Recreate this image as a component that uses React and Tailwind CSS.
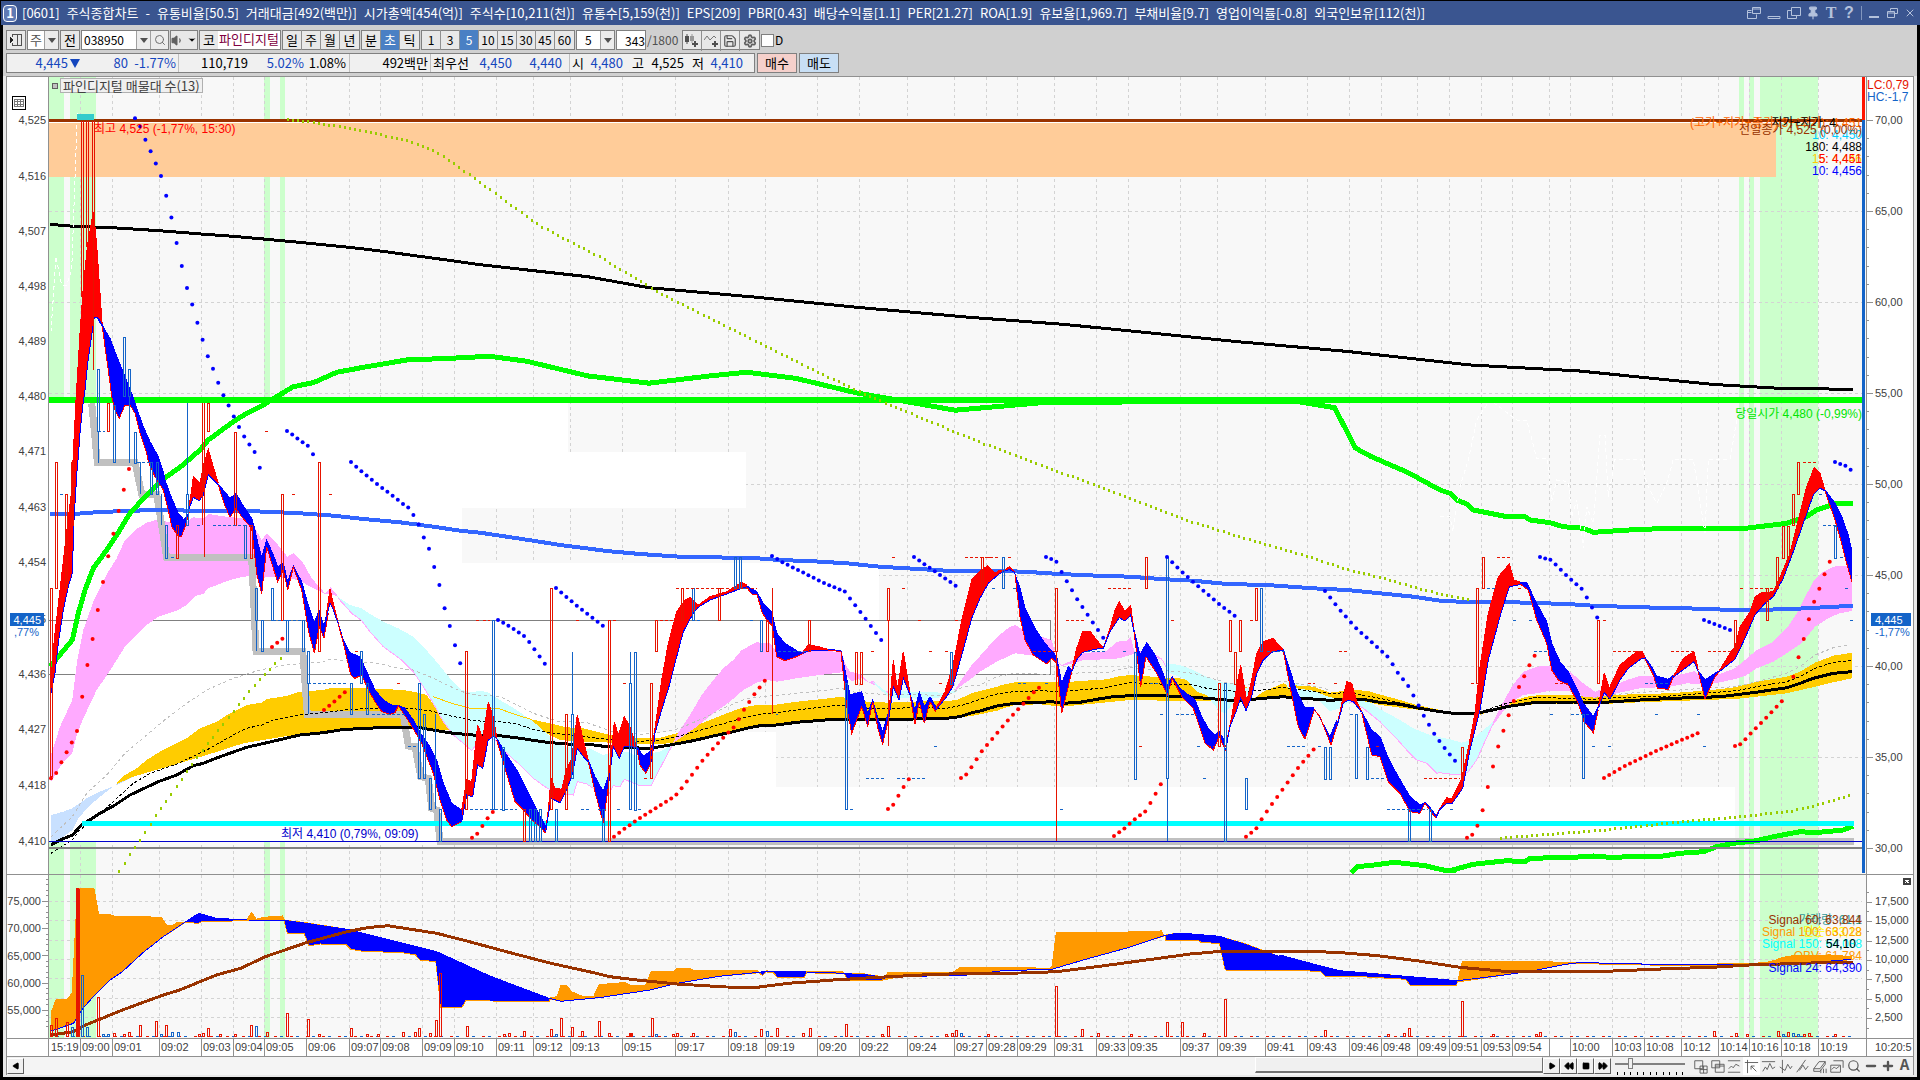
import { ChevronDown, Search, Volume1, Save, Settings, Play, Rewind, Square, FastForward, Minus, Plus, Pin, X } from 'lucide-react';

// Each tile turns a compact "x,y x,y" string into plot points.
const tile = (ox, oy, kx = 3, ky = 3) => (s) =>
  s.trim().split(/\s+/).map((p) => {
    const [a, b] = p.split(',').map(Number);
    return [ox + a / kx, oy + b / ky];
  });

const O = tile(0, 0, 0.8167, 0.8167);
const A = tile(0, 80);
const B = tile(0, 460);
const C = tile(480, 520);
const D = tile(980, 520);
const E = tile(1440, 420);
const F = tile(0, 860, 2.45);
const G = tile(610, 900, 2.24);
const H = tile(1280, 860, 2.45);

const str = (pts) => pts.map(([x, y]) => `${x.toFixed(1)},${y.toFixed(1)}`).join(' ');

// sample a polyline every `step` pixels along x
const sample = (pts, step = 5.2) => {
  const out = [];
  let i = 0;
  for (let x = pts[0][0]; x <= pts[pts.length - 1][0] + 0.5; x += step) {
    while (i < pts.length - 2 && x > pts[i + 1][0]) i++;
    const [x1, y1] = pts[i];
    const [x2, y2] = pts[i + 1];
    out.push([x, y1 + ((x - x1) / (x2 - x1 || 1)) * (y2 - y1)]);
  }
  return out;
};

const RED = '#e61400';
const BLUE = '#1464c8';

const gridX = [80, 112, 159, 201, 233, 264, 306, 349, 380, 422, 454, 496, 533, 570, 622, 675, 728, 765, 817, 859, 907, 954, 986, 1017, 1054, 1096, 1128, 1180, 1217, 1265, 1307, 1349, 1381, 1417, 1449, 1481, 1512, 1549, 1570, 1612, 1644, 1681, 1718, 1749, 1781, 1818];
const times = ['09:00', '09:01', '09:02', '09:03', '09:04', '09:05', '09:06', '09:07', '09:08', '09:09', '09:10', '09:11', '09:12', '09:13', '09:15', '09:17', '09:18', '09:19', '09:20', '09:22', '09:24', '09:27', '09:28', '09:29', '09:31', '09:33', '09:35', '09:37', '09:39', '09:41', '09:43', '09:46', '09:48', '09:49', '09:51', '09:53', '09:54', '', '10:00', '10:03', '10:08', '10:12', '10:14', '10:16', '10:18', '10:19'];
const gridY = [211, 302, 393, 484, 575, 666, 757];
const subY = [901, 920, 940, 959, 978, 998, 1017];
const sessions = [[49, 15], [70, 26], [264, 6], [280, 5], [1739, 5], [1749, 5], [1760, 58]];

// volume profile rows: y, height, right edge
const profile = [[403, 49, 568], [452, 56, 746], [508, 55, 462], [563, 57, 879], [620, 54, 1050], [674, 58, 633], [732, 55, 776], [787, 55, 1735]];

// filled bands: colour, upper edge, lower edge
const bands = [
  ['#c8e0ff', B('153,1065 190,1055 217,1045 260,1015 300,995 350,975 400,950'), B('153,1150 190,1130 217,1110 232,1080 260,1045 300,1010 350,972 400,950')],
  ['#ffaaff', B('153,885 180,800 217,720 232,600 250,510 280,425 325,335 350,295 375,240 405,210 440,188 475,178 500,185 560,185 580,172 610,176 625,162 665,168 690,172 755,175 765,205 785,240 800,220 830,250 862,290 880,280 910,310 935,355 975,400 992,382 1015,410'), B('153,965 190,905 217,880 232,820 250,775 290,690 325,640 375,560 440,495 475,470 530,452 560,435 585,408 610,402 625,385 690,360 730,350 755,348 785,358 800,350 840,352 880,357 905,365 930,380 975,402 1000,405')],
  ['#ffcc00', B('350,970 375,945 410,925 440,900 480,875 530,850 560,835 600,805 650,785 690,760 740,735 785,728 800,717 860,708 900,695 970,690 990,685 1085,685 1150,687 1210,690 1250,697 1280,705 1355,810'), B('350,972 400,950 440,938 530,912 620,885 730,850 800,838 900,822 1050,808 1240,805 1355,812')],
  ['#ffcc00', C('150,597 200,608 260,622 310,625 370,640 420,650 500,655 540,653 590,640 640,620 690,600 740,580 790,562 830,555 880,555 950,545 1020,538 1085,530 1110,540 1165,545 1225,548 1300,545 1400,543 1430,540 1480,518 1520,508 1560,498'), C('150,600 200,640 240,660 300,665 400,668 500,672 580,670 640,662 740,640 830,620 900,615 1000,605 1085,600 1225,600 1400,598 1480,587 1560,570')],
  ['#ffcc00', D('60,496 105,487 180,485 250,487 300,483 380,478 410,470 450,465 540,472 640,478 680,490 740,497 800,500'), D('60,568 105,555 180,553 245,560 350,550 450,540 560,542 640,542 740,545 800,545')],
  ['#ccffff', [...B('1000,395 1015,412 1050,435 1085,445 1110,462 1150,485 1195,505 1240,530 1270,560 1305,600 1350,655 1385,690 1415,697 1435,693'), ...C('20,515 60,540 110,570 160,605 200,640 240,675 300,690 330,685 370,705 400,695 440,695 480,712 510,700 540,695 575,675')], [...B('1000,395 1055,460 1085,482 1110,515 1150,560 1205,600 1240,635 1270,680 1300,730 1330,785 1360,825 1390,850 1415,872 1432,850'), ...C('5,675 25,650 45,660 80,700 120,735 160,775 195,800 230,820 280,825 292,785 320,792 370,825 385,825 400,797 420,800 433,778 480,797 515,795 540,745 575,677')]],
  ['#ffaaff', C('585,655 600,630 630,585 665,525 700,480 730,445 760,420 785,390 830,367 870,370 890,395 950,395 985,393 1085,395 1095,430 1110,455 1140,462 1165,487 1180,482 1200,505 1225,515'), C('585,665 600,655 650,620 700,580 750,545 790,510 830,488 860,480 890,485 950,475 1020,465 1085,457 1115,483 1145,475 1170,490 1190,497 1225,520')],
  ['#ccffff', C('1180,485 1225,520 1250,510 1300,515 1390,518 1430,510'), C('1180,490 1225,530 1250,535 1300,535 1335,540 1390,530 1430,515')],
  ['#ffaaff', [...C('1425,510 1440,485 1475,435 1500,408'), ...D('50,352 90,320 105,315 140,335 185,350 215,360 230,420 245,437')], [...C('1425,515 1440,500 1475,475 1500,455'), ...D('50,425 105,400 160,407 200,410 230,425 245,440')]],
  ['#ffaaff', D('245,435 280,420 310,400 380,393 410,365 440,362 452,352 465,400 500,385 520,400 545,415 560,440'), D('245,438 280,430 310,420 380,418 420,415 450,405 475,400 500,400 545,420 560,445')],
  ['#ccffff', D('560,430 600,435 640,450 680,470 715,485 740,490 770,490 800,505 815,500'), D('560,455 620,480 650,515 680,525 715,570 735,580 760,550 790,540 815,530')],
  ['#ffcc00', D('815,540 850,515 910,490 935,500'), D('815,542 850,537 910,533 935,537')],
  ['#ccffff', [...D('920,485 1000,505 1050,530 1100,520 1140,535 1160,540 1205,570 1260,600 1300,625 1350,645'), ...E('0,952 30,958 65,968 95,960 130,930 160,905')], [...D('920,500 950,530 975,540 1010,535 1050,573 1080,565 1110,545 1150,565 1200,605 1240,645 1280,690 1310,720 1340,730 1370,760'), ...E('0,1058 30,1062 65,1065 85,1055 110,1020 130,975 160,910')]],
  ['#ffcc00', D('930,495 1000,500 1050,518 1110,510 1160,512 1205,525 1260,540 1310,555 1380,570'), D('930,502 1000,512 1050,532 1110,538 1150,543 1200,555 1300,568 1380,575')],
  ['#ffcc00', E('120,880 160,870 200,848 260,830 300,825 380,825 465,830 520,825 600,822 690,820 790,812 835,808 885,802 950,785 1040,770 1080,755 1125,728 1180,707 1236,698'), E('120,884 200,862 290,852 380,852 465,853 600,847 790,840 885,837 950,830 1040,820 1125,800 1180,787 1236,775')],
  ['#ffaaff', E('160,905 185,855 215,800 250,755 290,740 325,737 355,748 390,755 430,790 465,815 495,805 515,800 560,780 600,768 640,768 660,778 690,778 715,765 765,753 790,780 800,787 830,765 885,745 915,720 950,690 1000,665 1040,625 1070,580 1085,550 1120,485 1150,455 1180,440 1215,437 1236,445'), E('160,915 185,880 215,845 250,825 290,820 330,812 390,812 430,830 465,833 520,822 600,805 690,800 740,790 790,793 835,788 885,777 915,768 950,745 1000,725 1040,700 1085,670 1125,620 1170,592 1200,580 1236,573')],
];

// moving average ribbon: up flag, upper edge, lower edge
const ribbon = [
  [1, [...B('153,695 157,600 165,520 185,345 200,215 215,90'), ...A('220,1120 228,960 240,760 250,620 262,500 272,440 280,395 285,440 292,520 300,640 307,738')], [...B('153,700 165,640 175,550 190,450 205,380 217,340 222,180 232,20'), ...A('235,1130 240,1060 248,980 255,930 262,860 270,800 283,712 292,712 307,740')]],
  [0, [...A('292,712 300,722 312,745 330,775 345,815 365,865 395,940 410,985 430,1040 450,1085 475,1130 490,1175'), ...B('495,60 515,115 535,160 552,180 568,155')], [...A('307,740 315,800 325,870 335,950 345,990 358,1015 375,975 390,975 405,1000 420,1060 440,1120'), ...B('445,5 465,50 490,90 505,150 515,200 535,228 545,228 555,200 568,157')]],
  [1, B('565,150 575,90 580,50 600,70 612,10 625,-32 640,20 655,70'), B('565,152 580,112 598,122 610,105 625,45 655,75')],
  [0, B('655,72 690,115 708,100 725,130 755,175 765,210 775,255 785,292 800,240 820,285 833,320 850,310 863,365 880,318 905,365 920,420 943,490 957,450 972,500 985,440'), B('655,75 672,130 690,172 708,145 725,170 755,205 770,340 785,402 800,260 820,325 833,365 850,330 863,390 880,322 905,390 925,510 943,580 958,500 972,535 985,460')],
  [1, B('978,470 990,387 1000,430 1015,490'), B('978,480 990,428 1000,450 1015,492')],
  [0, B('1015,490 1030,540 1050,578 1080,590 1100,635 1125,690 1150,720 1180,738 1195,735 1215,745 1240,780 1265,825 1290,860 1310,900 1330,970 1355,1030 1385,1050'), B('1015,492 1035,570 1052,645 1065,655 1085,645 1105,690 1125,725 1145,755 1170,763 1185,758 1195,737 1230,790 1265,850 1300,940 1320,1020 1340,1080 1355,1100 1385,1085')],
  [1, [...B('1385,1050 1400,960 1415,965 1433,795 1448,835'), ...C('25,545 40,590 50,650')], [...B('1385,1085 1400,1005 1418,1010 1433,915 1448,925 1465,840'), ...C('40,650 50,655')]],
  [0, C('50,655 80,705 110,750 140,810 170,870 197,918'), C('50,660 75,745 105,845 130,870 155,900 180,920 197,940')],
  [1, C('197,930 205,870 213,775 225,805 245,808 260,745 275,715 292,585 305,640 325,720'), C('197,935 213,835 240,848 260,810 278,760 292,685 310,710 325,725')],
  [0, C('325,720 345,770 370,815 385,770'), C('325,725 345,815 370,910 385,800')],
  [1, C('385,785 403,605 415,645 433,590 450,620 470,680'), C('385,800 400,680 418,715 433,680 450,678 470,685')],
  [0, C('470,680 490,708 510,695 520,665'), C('470,685 480,735 497,760 510,735 520,690')],
  [1, C('515,690 530,590 545,480 565,370 590,275 615,240 630,233 655,255 690,230 740,215 785,187 800,195'), C('515,725 525,640 545,570 570,490 590,410 610,335 640,280 655,262 690,240 740,222 785,205 800,200')],
  [0, C('800,198 830,215 850,250 875,275 890,340 915,370 955,395 970,397'), C('800,202 815,222 832,225 845,275 860,300 877,318 890,410 915,422 945,412 970,400')],
  [1, C('970,395 985,373 1015,380 1045,388'), C('970,400 985,392 1015,392 1045,390')],
  [0, C('1045,388 1083,392 1095,450 1110,525 1145,515 1163,580 1178,540 1195,600 1208,635 1225,580'), C('1045,390 1083,395 1100,560 1115,640 1130,600 1145,560 1163,620 1178,545 1195,630 1208,672 1225,600')],
  [1, C('1225,600 1240,420 1252,510 1270,395 1290,520'), C('1225,605 1240,500 1257,540 1270,475 1290,525')],
  [0, C('1290,520 1305,570 1318,515 1333,560 1350,530 1368,562'), C('1290,525 1305,612 1318,545 1333,610 1350,545 1368,577')],
  [1, C('1368,565 1395,515 1418,440 1430,380 1445,300 1475,180 1505,150 1522,138 1545,160 1560,150 1575,150 1588,140 1605,155'), C('1368,570 1400,530 1418,500 1430,460 1455,370 1475,295 1500,235 1525,190 1560,160 1588,148 1605,158')],
  [0, D('103,155 120,205 135,265 165,325 195,370 230,410 245,490 265,440 275,450'), D('105,165 120,290 135,360 160,405 200,432 215,415 230,430 245,580 260,520 275,455')],
  [1, D('275,450 290,385 308,335 330,333 350,360 370,383 390,325 405,270 418,245 435,275 452,258 462,330'), D('275,455 290,420 308,397 345,388 370,385 390,335 418,293 435,303 452,285 462,335')],
  [0, D('462,330 480,405 500,368 525,405 545,450 562,495 577,470 600,505 645,540 665,590 685,625 705,645 718,635 735,665'), D('462,335 470,400 482,500 498,410 530,460 562,525 577,475 605,530 640,565 675,670 700,690 718,650 737,692')],
  [1, D('737,680 755,590 770,500 782,435 800,545 815,480 830,400 850,365 878,355 910,388'), D('737,690 750,620 770,570 782,535 798,572 815,530 830,460 850,420 878,395 910,390')],
  [0, D('910,388 930,450 950,515 975,563 1000,563 1015,585 1050,650 1070,600'), D('910,392 930,500 955,620 975,658 1003,570 1020,590 1053,675 1070,620')],
  [1, D('1070,620 1090,530 1100,485 1115,490 1130,545 1145,575'), D('1070,622 1090,550 1105,540 1120,545 1145,577')],
  [0, D('1145,575 1175,630 1200,650 1225,715 1255,770 1290,830 1320,855 1335,848 1350,862 1368,887'), D('1145,578 1175,705 1200,710 1225,785 1260,820 1290,875 1320,880 1335,850 1367,895')],
  [1, [...D('1367,890'), ...E('0,1165 20,1133 35,1137 65,1075 85,985 105,880 120,740 145,580 175,470 208,432 222,480 250,490')], [...D('1367,895'), ...E('0,1168 20,1150 35,1152 68,1105 90,990 120,870 145,720 180,590 208,500 250,492')]],
  [0, E('240,488 260,488 290,550 320,605 335,670 360,725 385,755 415,815 430,850 460,890 475,860'), E('240,492 265,510 290,600 320,670 335,750 355,780 385,795 415,850 432,905 460,938 475,870')],
  [1, E('475,860 493,758 508,805 540,735 565,715 590,695 605,693 615,710'), E('475,865 493,818 510,838 540,780 565,745 605,715 615,715')],
  [0, E('615,712 635,740 650,768 685,778 700,765'), E('615,716 640,765 652,805 685,808 700,770')],
  [1, E('700,770 730,715 762,695 775,750'), E('700,772 735,745 762,725 775,755')],
  [0, E('775,752 795,780 825,760 838,752'), E('775,755 795,838 825,770 838,755')],
  [1, E('838,752 870,700 885,680 900,620 930,575 945,530 965,518 1000,515 1025,460 1050,400 1075,300 1100,200 1123,142 1140,160 1155,210'), E('838,755 885,718 915,655 945,585 975,550 1000,530 1030,475 1060,395 1090,310 1120,225 1140,205 1155,212')],
  [0, E('1155,210 1185,250 1205,290 1225,345 1236,395'), E('1155,213 1185,300 1205,370 1220,430 1236,487')],
];

const lines = [
  { c: '#c0c0c0', w: 1, dash: '3 3', p: [...B('153,1130 217,1070 260,1000 320,945 375,880 440,825 500,775 560,730 620,690 700,655 780,630 860,615 970,605 990,598 1070,605 1130,610 1200,625 1240,630 1290,650 1340,675 1400,700 1430,705'), ...C('0,525 60,530 110,555 160,580 230,603 320,608 400,635 480,643 540,638 600,625 680,590 740,560 800,535 850,530 930,522 1000,515 1085,505 1110,515 1170,520 1225,525 1300,523 1400,528 1450,500'), ...D('0,495 50,470 105,460 180,462 250,465 300,458 380,458 410,450 450,443 540,450 640,460 740,488 800,495 860,488 910,483 1000,498 1050,510')] },
  { c: '#c0c0c0', w: 1, dash: '3 3', p: E('465,832 560,820 690,812 790,805 885,800 950,785 1040,760 1080,740 1125,705 1180,683 1225,675') },
  { c: '#ffcc00', w: 1, p: [...B('1300,710 1355,730 1410,745'), ...C('0,565 60,567 110,585 150,597')] },
  { c: '#ffaaff', w: 1, p: [...B('1015,415 1055,460 1085,482 1110,515 1150,560 1205,600 1240,635 1270,680 1300,730 1330,785 1360,825 1390,850 1415,872 1432,850'), ...C('5,675 25,650 45,660 80,700 120,735 160,775 195,800 230,820 280,825 292,785 320,792 370,825 385,825 400,797 420,800 433,778 480,797 515,795 540,745 585,660')] },
  { c: '#ffaaff', w: 1, p: [...D('1110,545 1150,565 1200,605 1240,645 1280,690 1310,720 1340,730 1370,760'), ...E('0,1058 30,1062 65,1065 85,1055 110,1020 130,975 160,910')] },
  { c: '#000', w: 1, dash: '3 2', p: [...B('153,1180 217,1140 240,1110 300,1060 345,1020 400,970 450,940 530,912 620,870 700,825 740,805 785,795 820,780 900,765 970,758 1050,748 1130,745 1230,745 1290,752 1340,765 1420,782'), ...C('0,603 50,603 110,612 160,628 220,640 300,648 380,658 460,665 540,660 600,648 680,625 740,608 800,590 850,582 900,577 950,570 1020,562 1085,555 1130,563 1225,567 1300,562 1400,565 1450,555'), ...D('0,538 50,522 100,515 180,512 245,515 300,510 380,503 410,495 450,488 540,492 640,495 680,505 740,512 800,515 850,510 910,502 1000,515 1050,520 1110,518 1200,535 1260,548 1350,568'), ...E('0,878 120,876 200,850 290,832 460,838 520,833 690,828 790,820 890,812 960,798 1040,785 1080,770 1125,745 1180,727 1236,722')] },
  { c: '#000', w: 3, p: [...B('153,1155 180,1140 217,1125 245,1095 300,1060 345,1035 390,1005 475,965 530,945 580,917 610,910 660,890 740,862 800,848 900,825 970,818 1020,810 1085,805 1200,802 1260,803 1310,812 1360,820 1430,826'), ...C('0,645 60,647 120,655 200,667 260,672 320,672 380,680 440,683 510,685 570,675 640,662 700,648 760,635 800,625 840,617 890,615 950,607 1010,602 1070,597 1130,597 1200,600 1300,597 1400,595 1440,590 1480,577'), ...D('0,573 50,558 105,550 180,547 215,545 250,550 300,547 350,538 400,530 450,527 540,527 620,530 680,535 740,540 800,540 850,535 910,530 950,535 1000,537 1050,541 1110,537 1160,540 1200,547 1260,553 1320,565'), ...E('0,875 60,882 110,880 160,870 200,860 280,848 350,846 400,846 460,849 520,845 600,840 700,835 790,832 840,830 900,823 960,815 1040,803 1080,790 1120,775 1180,760 1236,755')] },
  { c: '#000', w: 3, p: [...A('150,433 210,438 337,443 478,452 604,462 700,469 800,478 919,489 1048,502 1141,513 1267,530 1363,543 1440,554'), ...O('480,226 530,235 620,243 700,251 790,259 870,265 940,272 1010,279 1100,287 1200,298 1290,303 1400,314 1450,317 1513,318')] },
  { c: '#3366ff', w: 4, p: [...B('150,162 220,162 300,156 400,152 470,150 580,152 700,152 800,155 900,160 1000,167 1100,178 1200,187 1300,200 1380,212'), ...C('0,38 80,50 160,62 240,75 320,85 380,93 480,102 600,110 700,112 830,115 900,120 1000,124 1100,130 1200,140 1300,146 1400,152'), ...D('60,152 160,157 240,162 350,167 450,170 540,177 640,182 740,192 860,195 1000,205 1100,210 1200,220 1300,230'), ...E('0,542 60,545 220,547 380,552 460,557 600,562 740,565 880,570 960,570 1040,567 1100,565 1180,560 1238,558')] },
  { c: '#00ff00', w: 5, p: [...B('150,620 217,540 235,460 255,390 280,325 320,270 350,225 390,160 440,105'), ...A('490,1197 540,1162 600,1110 625,1080 700,1025 740,1000 790,975 830,950 880,920 940,908 1010,877 1100,860 1220,840 1350,835'), ...O('380,292 400,291 430,295 480,307 530,313 580,307 610,304 650,309 700,321 740,328 780,335 850,329 950,328 1060,328 1090,333 1107,366 1120,373 1150,386'), ...E('0,210 30,220 50,240 80,252 100,270 190,288 255,290 270,300 330,308 370,320 430,325 460,337 600,328 720,325 900,327 1040,310 1100,290 1130,270 1190,250 1240,250')] },
  { c: '#00ff00', w: 5, p: [...H('175,38 190,20 230,15 280,7 355,17'), ...H('400,30 430,30'), ...E('30,1352 100,1333 200,1322 255,1325 270,1315 400,1312 460,1308 510,1312 670,1308 720,1300 790,1295 830,1280 880,1270 950,1262 1000,1250 1080,1235 1125,1238 1210,1230 1240,1218')] },
  { c: '#fff', w: 1, dash: '4 3', p: A('153,755 168,530 185,615 200,615 215,570 232,100') },
  { c: '#fff', w: 1, dash: '4 3', p: E('0,290 30,290 38,335 60,200 85,120 110,0 150,-60 230,0 260,0 290,115 322,115 335,245 350,180 385,185 395,290 410,240 430,385 440,260 460,310 480,45 495,45 505,230 525,118 605,118 620,190 650,250 680,190 700,118 760,118 795,340 805,118 870,118 890,0') },
];

const olive = [
  [...A('860,118 920,123 1010,138 1100,155 1220,180 1300,210 1360,250 1430,300'), ...O('440,184 490,210 540,240 600,270 660,300 700,319 730,332 800,361 850,380 900,398 960,421'), ...D('620,0 740,38 850,70 980,108 1100,147 1240,182 1340,212'), ...E('0,520 80,538')],
  [...O('1225,685'), ...E('175,1253 350,1240 500,1228 710,1205 830,1195 950,1183 1050,1173 1130,1153 1236,1123')],
  B('355,1232 385,1185 420,1135 465,1065 515,995 575,910 620,850 700,750 760,675 845,587'),
];

const sarDown = [
  A('405,115 420,138 435,177 453,216 468,252 483,288 498,345 516,420 531,495 546,561 561,624 579,681 594,735 609,783 624,831 642,873 657,915 672,950 690,985 705,1017 720,1047 735,1074 753,1101 768,1122 783,1176'),
  A('861,1053 879,1065 894,1077 924,1098 942,1128'),
  B('1053,6 1083,33 1131,72 1179,108 1209,132 1227,144 1242,168 1257,195 1272,234 1290,273 1305,330 1320,381 1335,450 1353,510 1368,567 1383,618'),
  C('54,300 87,318 132,348 150,369 195,432'),
  C('228,204 291,258 369,318'),
  C('876,108 906,126 954,150 1032,189 1098,216 1113,240 1146,282 1206,363'),
  C('1302,111 1350,144 1428,198'),
  D('198,111 228,123 243,153 291,237 372,357'),
  D('561,111 606,156 654,198 717,252 765,288'),
  D('1035,213 1080,270 1128,324 1224,411 1254,459 1287,501 1335,594 1365,645 1398,690 1428,726'),
  E('300,411 333,420 381,468 429,510 444,540 474,597'),
  E('792,600 870,630'),
  E('1185,126 1218,138 1233,150'),
];
const sarUp = [
  B('153,955 167,942 183,909 216,846 231,813 246,714 261,621 279,531 294,447 309,366 324,291 341,218 357,148 372,87 387,27'),
  B('816,561 831,549 846,537'),
  B('972,750 1005,723 1035,696'),
  B('1416,1133 1431,1122 1446,1100 1461,1077 1479,1055'),
  C('402,950 432,927 480,894 528,864 576,834 591,822 624,780 669,720 717,666 765,618 795,564 828,516 861,474'),
  C('1224,867 1239,855 1269,804 1287,777'),
  [...C('1443,774 1461,762 1506,693'), ...D('39,654 87,597 135,546 165,513 180,501')],
  D('402,948 435,924 465,897 498,873 513,846 543,792'),
  D('798,950 828,927 843,900 876,852 909,807 954,744 1002,687'),
  E('81,1253 96,1245 111,1221 129,1167 144,1098 174,981 207,882 237,801 270,732 285,705'),
  E('492,1074 555,1038 648,993 711,966 774,939'),
  E('885,978 903,972 933,939 981,891 1029,840'),
  E('1060,770 1074,717 1092,654 1107,597 1122,546 1140,501 1155,459 1170,423'),
];

// candles per tile: "x,top,bottom"; wicks are single lines
const bars = (ox, oy, s) => s.split(' ').map((c) => {
  const [x, a, b] = c.split(',').map(Number);
  return [Math.round(ox + x / 3), Math.round(oy + a / 3), Math.round((b - a) / 3)];
});
const redCandles = [
  ...bars(0, 80, '325,970,1055 625,970,1055 706,1055,1335'),
  ...bars(0, 460, '154,385,950 169,7,385 199,103,385 217,7,195 532,195,293 754,195,293 847,103,481 958,7,574 1399,574,1048'),
  ...bars(480, 520, '214,205,868 259,583,868 388,301,963 133,868,963 514,490,775 529,301,395 607,205,301 718,205,301 862,301,395 988,301,395 1129,395,490 1144,395,490 1225,205,301 1507,112,205'),
  ...bars(980, 520, '229,205,395 499,112,205 718,490,680 751,301,395 766,395,490 781,301,395 829,205,301'),
  ...bars(1440, 420, '67,980,1075 112,505,790 130,412,505 475,600,790 886,600,693 982,505,600 1012,412,505 1030,317,412 1045,317,412 1060,223,317 1075,127,223'),
];
const blueCandles = [
  ...bars(0, 80, '295,868,1055 343,975,1147 373,772,950 388,868,950 406,1055,1147'),
  ...bars(0, 460, '454,7,103 470,7,103 499,195,293 562,103,195 736,195,293 769,385,481 785,481,574 817,385,481 862,481,574 910,481,574 925,574,670 1054,670,762 1084,574,670 1100,670,762 1258,670,955 1273,762,955 1291,955,1048 1321,1048,1143 1480,481,1048'),
  ...bars(480, 520, '70,680,868 151,868,963 166,868,963 181,868,963 229,868,963 277,583,775 370,868,963 451,490,868 466,395,868 640,205,301 766,112,205 781,112,205 844,301,395 1099,490,868 1414,395,490'),
  ...bars(980, 520, '70,112,205 466,395,775 562,112,775 736,490,963 799,775,868 844,205,395 1036,680,775 1051,680,775 1129,583,775 1162,680,775 1288,868,963 1351,868,963'),
  ...bars(1440, 420, '430,883,1075 1186,317,412'),
];
const redWicks = [
  ...bars(0, 80, '243,122,650 250,122,620 259,122,500 265,122,490 277,122,440 283,122,440 280,440,870 607,970,1335 613,970,1433'),
  ...bars(480, 520, '877,205,583 1225,301,680'),
  ...bars(980, 520, '229,395,963'),
];
const blueWicks = [
  ...bars(0, 80, '295,1055,1147 388,950,1147 562,970,1243'),
  ...bars(0, 460, '421,7,103 484,103,195 769,481,574 925,670,762 1306,762,1048'),
  ...bars(480, 520, '277,395,583 451,395,490'),
  ...bars(980, 520, '562,775,963'),
];
const redDashes = [
  ...A('795,1055 804,1055'), ...B('875,103 885,103 987,103 996,103 354,148 360,148 1065,574 1075,574 1190,670 1200,670 1428,481 1438,481 1450,481 1470,481'),
  ...C('588,205 830,205 540,301 600,301 288,301 298,301 398,301 408,301 430,490 438,490 1235,112 1245,112 1266,205 1276,205 1455,112 1560,112 1314,301 1324,301 1425,301 1435,301 1347,395 1357,395 1395,395 1405,395 1377,490 1387,490 1173,395 1183,395 492,775 500,775'),
  ...D('20,112 30,112 83,112 93,112 385,205 455,205 258,301 312,301 573,301 582,301 160,395 225,395 810,301 820,301 1077,395 1105,395 985,490 1005,490 1062,490 1072,490 478,680 487,680 685,680 705,680 1188,680 1197,680 1332,775 1440,775'),
  ...E('170,412 215,412 235,505 245,505 488,600 498,600 92,790 102,790 345,790 385,790 520,693 605,693 693,693 765,693 805,693 880,693 900,505 910,505 930,505 1005,505 1090,127 1130,127'),
];
const blueDashes = [
  ...A('295,1055 315,1055 410,1147 450,1147'),
  ...B('180,103 190,103 513,293 523,293 590,195 602,195 640,195 735,195 820,481 910,481 925,670 1040,670 1115,762 1215,762 1225,858 1255,858 1410,1048 1440,1048'),
  ...C('0,868 110,868 303,868 330,868 355,868 385,868 412,868 424,868 475,868 487,868 790,205 804,205 810,301 820,301 895,395 985,395 1110,868 1120,868 1158,775 1215,775 1250,775 1335,775 1362,680 1372,680 888,583 895,583 650,301 660,301'),
  ...D('35,205 45,205 100,205 110,205 320,395 380,395 430,395 440,395 115,490 140,490 195,490 205,490 510,490 540,490 540,583 550,583 588,583 650,583 650,680 660,680 860,395 915,395 920,680 975,680 1015,680 1025,680 1110,583 1120,583 1172,775 1215,775 1220,868 1345,868 668,775 678,775 240,868 250,868 1410,868 1420,868'),
  ...E('140,505 165,505 218,600 228,600 266,600 276,600 283,693 325,693 330,883 340,883 393,883 450,883 455,979 465,979 503,979 513,979 615,790 690,790 645,883 655,883 770,883 780,883 788,979 798,979 30,1168 40,1168 1137,223 1147,223 1150,317 1190,317 1200,412 1210,412 1214,505 1224,505 1230,600 1238,600'),
];

const obv = [
  ['#ff9900', F('125,460 138,417 165,417 177,400 190,84 230,84 242,165 265,162 280,168 395,172 408,195 425,195 435,187 455,186'), F('125,513 180,490 200,450 225,415 270,360 300,335 350,278 400,230 455,186')],
  ['#0000ff', F('455,185 487,160 530,175 570,179 605,180'), F('455,187 485,190 495,185 570,183 605,182')],
  ['#ff9900', F('605,180 616,157 628,178 645,172 692,168 697,180'), F('605,182 697,183')],
  ['#0000ff', F('697,181 750,188 850,208 930,232 1000,255 1070,275 1130,310 1200,348 1280,385 1345,415'), F('697,185 704,220 745,220 757,257 785,252 848,254 860,268 895,275 980,277 1018,285 1028,300 1068,305 1080,442 1132,442 1142,420 1200,423 1345,424')],
  ['#ff9900', [...F('1345,415 1365,410 1375,375 1388,375 1400,395 1425,408 1455,408 1467,375 1500,370'), ...G('35,248 45,255 80,255 92,215 145,213 150,205 180,205 185,210 328,210 335,220')], [...F('1345,416 1375,424 1425,415 1475,412'), ...G('0,288 90,270 150,250 250,228 335,218')]],
  ['#0000ff', G('335,220 350,213 440,214'), G('335,222 342,226 350,216 365,217 375,232 435,232 440,218')],
  ['#ff9900', G('440,217 450,213 518,213 525,220'), G('440,218 525,222')],
  ['#0000ff', G('525,220 570,222 610,230 625,231'), G('525,222 532,241 610,241 625,234')],
  ['#ff9900', G('610,240 622,219 750,217 765,220 785,202 880,202 985,205 990,200 1000,96 1160,96 1170,94 1235,93 1240,107'), G('610,240 650,230 800,225 880,212 990,208 1060,180 1160,143 1240,108')],
  ['#0000ff', [...G('1245,105 1275,99 1365,109 1420,130 1500,170'), ...H('0,285 60,305 145,332 300,348 435,362')], [...G('1245,122 1320,123 1325,128 1365,130 1378,210 1568,213'), ...H('98,333 110,348 200,350 308,358 318,375 432,378 435,364')]],
  ['#ff9900', H('435,365 447,304 620,304 715,308 730,308'), H('435,366 550,345 620,332 700,313 730,310')],
  ['#ff9900', H('730,309 830,310 940,314 1130,311 1190,308 1215,300 1230,293 1260,286 1350,285 1400,290'), H('730,311 830,313 940,316 1130,315 1215,313 1300,308 1400,299')],
];
const signal24 = [...F('125,513 180,490 200,450 225,415 270,360 300,335 350,278 400,230 455,185 487,160 530,175 605,180 697,181 850,208 930,232 1070,275 1200,348 1345,415 1375,424 1475,412'), ...G('0,288 90,270 150,250 250,228 335,217 350,214 440,216 525,220 610,230 650,230 800,225 880,212 990,208 1060,180 1160,143 1240,107 1275,99 1365,109 1500,170'), ...H('0,285 60,305 145,332 435,362 550,345 620,332 700,313 730,308 830,310 940,314 1130,315 1200,313 1300,308 1400,298')];
const signal60 = [...F('125,525 180,515 210,495 300,450 400,405 440,390 530,345 590,325 650,290 750,248 850,215 900,203 950,197 1070,220 1150,245 1250,278 1350,310 1450,337'), ...G('0,230 60,240 150,252 260,261 330,262 400,250 500,240 600,232 700,225 800,220 920,219 1000,215 1090,200 1190,182 1300,162 1370,154 1568,154'), ...H('150,278 240,287 340,303 440,322 560,335 700,336 800,334 950,326 1060,322 1150,315 1300,309 1405,307')];

const redVolume = [...F('126,496 138,475 163,487 188,84 192,88 241,412 280,520 304,522 317,517 344,496 383,484 407,496 487,522 498,520 510,505 538,523 576,523 616,496 653,517 704,460 755,478 782,523 861,505 898,523 925,523 988,517 1016,517 1027,505 1054,520 1067,481 1079,340 1143,499 1234,523 1248,520 1285,514 1351,508 1375,475 1402,502 1427,514 1467,484 1493,520 1544,520'), ...G('46,400 93,355 140,403 151,400 187,400 269,388 339,388 375,385 433,400 447,385 529,373 610,403 623,379 753,403 765,400 776,391 847,403 1000,259 1058,388 1094,400 1166,403 1248,367 1282,367 1331,400 1378,298'), ...H('111,511 265,523 304,520 317,505 447,424 523,523 626,523 638,517 1064,514 1116,520 1143,523 1219,514 1245,517 1285,523 1297,520 1360,523')];
const blueVolume = [...F('177,502 201,346 214,502 253,522 265,522 395,523 422,517 435,517 628,499 1363,523'), ...G('104,403 281,397 352,394 787,400'), ...H('1233,522 1258,520 1270,523')];

const poly = (up, down) => str([...up, ...[...down].reverse()]);
const pairs = (pts) => pts.filter((_, i) => i % 2 === 0).map((p, i) => [p, pts[i * 2 + 1]]);

const leftPrices = [['4,525', 120], ['4,516', 176], ['4,507', 231], ['4,498', 286], ['4,489', 341], ['4,480', 396], ['4,471', 451], ['4,463', 507], ['4,454', 562], ['4,445', 619], ['4,436', 674], ['4,427', 729], ['4,418', 785], ['4,410', 841]];

const chartFont = "font-['Liberation_Sans','Noto_Sans_CJK_KR',sans-serif]";

function Grid({ top, bottom, rows }) {
  return (
    <>
      <rect x="49" y={top} width="1817" height={bottom - top} fill="#f8f8f8" />
      {sessions.map(([x, w]) => <rect key={x} x={x} y={top} width={w} height={bottom - top} fill="#ccffcc" />)}
      {gridX.map((x) => <line key={x} x1={x + 0.5} x2={x + 0.5} y1={top} y2={bottom} stroke="#d3d3d3" strokeDasharray="3 3" />)}
      {rows.map((y) => <line key={y} x1="49" x2="1862" y1={y + 0.5} y2={y + 0.5} stroke="#d3d3d3" strokeDasharray="3 3" />)}
    </>
  );
}

function PriceChart() {
  return (
    <svg aria-label="가격 차트" viewBox="49 77 1817 797" preserveAspectRatio="none" shapeRendering="crispEdges" className={`block h-full w-full min-w-0 text-[12px] ${chartFont}`}>
      <Grid top={77} bottom={874} rows={gridY} />
      {profile.map(([y, h, r]) => <rect key={y} x="49" y={y} width={r - 49} height={h} fill="#fff" />)}
      <rect x="49" y="122" width="1727" height="55" fill="#ffcc99" />
      <rect x="49" y="121" width="1813" height="2" fill="#fff" />
      <path d="M49 620H1050V674H49" fill="none" stroke="#808080" />

      {bands.map(([c, up, down], i) => <polygon key={i} points={poly(up, down)} fill={c} />)}
      <polyline points={str([...A('275,970 292,1147 405,1147'), ...B('425,102 470,102 500,293 755,293 768,573 908,573 922,762 1210,762 1225,858 1245,860 1262,950 1285,955 1295,1045 1310,1050 1320,1143 1360,1143')])} fill="none" stroke="#c0c0c0" strokeWidth="7" />
      <rect x="440" y="838" width="1414" height="7" fill="#c0c0c0" />
      {lines.map((l, i) => <polyline key={i} points={str(l.p)} fill="none" stroke={l.c} strokeWidth={l.w} strokeDasharray={l.dash} />)}

      <rect x="49" y="119" width="1813" height="3" fill="#993300" />
      <rect x="49" y="397" width="1813" height="6" fill="#00ff00" />
      <rect x="77" y="114" width="17" height="6" fill="#33cccc" />
      <rect x="82" y="821" width="1772" height="5" fill="#00ffff" />
      <rect x="49" y="841" width="1813" height="1" fill="#0000cc" />
      <rect x="49" y="847" width="1813" height="2" fill="#808080" />

      {ribbon.map(([up, hi, lo], i) => (
        <g key={i}>
          <polygon points={poly(hi, lo)} fill={up ? '#ff0000' : '#0000ff'} />
          <polyline points={str(hi)} fill="none" stroke={up ? '#ff0000' : '#0000ff'} />
          <polyline points={str(lo)} fill="none" stroke={up ? '#0000ff' : '#ff0000'} />
        </g>
      ))}
      {olive.flatMap((p) => sample(p)).map(([x, y], i) => <rect key={i} x={Math.round(x)} y={Math.round(y) - 1} width="2" height="3" fill="#99cc00" />)}

      {redCandles.map(([x, y, h], i) => <rect key={i} x={x - 0.5} y={y + 0.5} width="2" height={h} fill="none" stroke={RED} />)}
      {blueCandles.map(([x, y, h], i) => <rect key={i} x={x - 0.5} y={y + 0.5} width="2" height={h} fill="none" stroke={BLUE} />)}
      {redWicks.map(([x, y, h], i) => <rect key={i} x={x} y={y} width="1" height={h} fill={RED} />)}
      {blueWicks.map(([x, y, h], i) => <rect key={i} x={x} y={y} width="1" height={h} fill={BLUE} />)}
      {pairs(redDashes).map(([a, b], i) => <line key={i} x1={a[0]} x2={b[0]} y1={a[1]} y2={b[1]} stroke={RED} strokeDasharray="3 2" />)}
      {pairs(blueDashes).map(([a, b], i) => <line key={i} x1={a[0]} x2={b[0]} y1={a[1]} y2={b[1]} stroke={BLUE} strokeDasharray="3 2" />)}

      {sarDown.flatMap((p) => sample(p)).map(([x, y], i) => <circle key={i} cx={x} cy={y} r="2" fill="#0000ff" shapeRendering="auto" />)}
      {sarUp.flatMap((p) => sample(p)).map(([x, y], i) => <circle key={i} cx={x} cy={y} r="2" fill="#ff0000" shapeRendering="auto" />)}

      <rect x="1862" y="77" width="3" height="43" fill="#ff1400" />
      <rect x="1862" y="120" width="3" height="753" fill="#1464c8" />

      <text x="94" y="133" fill="#ff0000">최고 4,525 (-1,77%, 15:30)</text>
      <text x="281" y="838" fill="#0000cc">최저 4,410 (0,79%, 09:09)</text>
      <text x="1862" y="418" fill="#00e600" textAnchor="end">당일시가 4,480 (-0,99%)</text>
      <g textAnchor="end">
        <text x="1862" y="127" fill="#ff6600">(고가+저가+종가)/3+(고가): 4,451</text>
        <text x="1836" y="127">저가+저가: 4</text>
        <text x="1862" y="139" fill="#00ccff">10: 4,450</text>
        <text x="1862" y="134" fill="#993300">전일종가 4,525 (0,00%)</text>
        <text x="1862" y="151">180: 4,488</text>
        <text x="1862" y="163" fill="#ffcc00">15: 4,446</text>
        <text x="1862" y="163" fill="#ff0000">5: 4,451</text>
        <text x="1862" y="175" fill="#0000ff">10: 4,456</text>
      </g>
    </svg>
  );
}

function VolumeChart() {
  return (
    <svg aria-label="OBV 차트" viewBox="49 875 1817 163" preserveAspectRatio="none" shapeRendering="crispEdges" className={`block h-full w-full min-w-0 text-[12px] ${chartFont}`}>
      <Grid top={875} bottom={1038} rows={subY} />
      <line x1="50" x2="1853" y1="1036" y2="1036" stroke={RED} strokeDasharray="3 3 3 7" />
      <line x1="56" x2="1853" y1="1036" y2="1036" stroke={BLUE} strokeDasharray="3 13" />
      <text x="1862" y="960" fill="#ff9900" textAnchor="end">OBV: 61,784</text>
      {obv.map(([c, up, down], i) => <polygon key={i} points={poly(up, down)} fill={c} stroke="#ff9900" />)}
      {obv.filter(([c]) => c === '#0000ff').map(([c, up, down], i) => <polygon key={i} points={poly(up, down.map(([x, y]) => [x, y - 1]))} fill={c} />)}
      <polyline points={str(signal24)} fill="none" stroke="#0000ff" />
      <polyline points={str(signal60)} fill="none" stroke="#993300" strokeWidth="3" />
      {redVolume.map(([x, y], i) => <rect key={i} x={Math.round(x) - 0.5} y={Math.round(y) + 0.5} width="2" height={1036 - Math.round(y)} fill="none" stroke={RED} />)}
      {blueVolume.map(([x, y], i) => <rect key={i} x={Math.round(x) - 0.5} y={Math.round(y) + 0.5} width="2" height={1036 - Math.round(y)} fill="none" stroke={BLUE} />)}
      <g textAnchor="end">
        <text x="1862" y="924" fill="#339999">거래량: 61,1</text>
        <text x="1862" y="924" fill="#993300">Signal 60: 63,844</text>
        <text x="1862" y="936" fill="#ffff00">단순: 63,12</text>
        <text x="1862" y="936" fill="#ff9900">Signal 100: 63,028</text>
        <text x="1862" y="948" fill="#00ffff">Signal 150: 64,088</text>
        <text x="1856" y="948">54,10</text>
        <text x="1862" y="972" fill="#0000ff">Signal 24: 64,390</text>
      </g>
    </svg>
  );
}

function LeftAxis() {
  return (
    <svg viewBox="7 77 42 961" preserveAspectRatio="none" shapeRendering="crispEdges" className={`row-span-2 block h-full w-full bg-white text-[11px] ${chartFont}`}>
      <rect x="48" y="77" width="1" height="961" fill="#909090" />
      <rect x="7" y="874" width="42" height="1" fill="#909090" />
      <g stroke="#000" fill="none">
        <rect x="12.5" y="96.5" width="13" height="13" />
        <path d="M14.5 99.5h9v7h-9zM14.5 101.5h9M17.5 99.5v7M20.5 99.5v7M14.5 104.5h9" stroke="#777" />
      </g>
      <g textAnchor="end" fill="#404040">
        {leftPrices.map(([t, y]) => <text key={t} x="46" y={y + 4}>{t}</text>)}
        {['75,000', '70,000', '65,000', '60,000', '55,000'].map((t, i) => <text key={t} x="41" y={905 + Math.round(i * 27.3)}>{t}</text>)}
      </g>
      {Array.from({ length: 28 }, (_, i) => (
        <rect key={i} x={i % 5 === 4 ? 42 : 46} y={Math.round(879 + i * 5.45)} width={i % 5 === 4 ? 6 : 2} height="1" fill="#909090" />
      ))}
      <rect x="10" y="613" width="34" height="13" fill="#1464c8" />
      <text x="41" y="624" fill="#fff" textAnchor="end">4,445</text>
      <text x="39" y="636" fill="#1464c8" textAnchor="end">,77%</text>
    </svg>
  );
}

function RightAxis() {
  return (
    <svg viewBox="1866 77 47 961" preserveAspectRatio="none" shapeRendering="crispEdges" className={`row-span-2 block h-full w-full bg-white text-[11px] ${chartFont}`}>
      <rect x="1866" y="77" width="1" height="961" fill="#909090" />
      <rect x="1866" y="874" width="47" height="1" fill="#909090" />
      {Array.from({ length: 41 }, (_, i) => (
        <rect key={i} x="1867" y={Math.round(120 + i * 18.2)} width={i % 5 ? 2 : 6} height="1" fill="#909090" />
      ))}
      {Array.from({ length: 15 }, (_, i) => (
        <rect key={i} x="1867" y={Math.round(892 + i * 9.7)} width={i % 2 ? 5 : 2} height="1" fill="#909090" />
      ))}
      <g fill="#404040">
        {['70,00', '65,00', '60,00', '55,00', '50,00', '45,00', '40,00', '35,00', '30,00'].map((t, i) => <text key={t} x="1875" y={124 + i * 91}>{t}</text>)}
        {['17,500', '15,000', '12,500', '10,000', '7,500', '5,000', '2,500'].map((t, i) => <text key={t} x="1875" y={subY[i] + 4}>{t}</text>)}
      </g>
      <g className="text-[12px]">
        <text x="1867" y="89" fill={RED}>LC:0,79</text>
        <text x="1867" y="101" fill="#1464c8">HC:-1,7</text>
      </g>
      <rect x="1871" y="613" width="40" height="13" fill="#1464c8" />
      <text x="1875" y="624" fill="#fff">4,445</text>
      <text x="1875" y="636" fill="#1464c8">-1,77%</text>
      <rect x="1903" y="878" width="8" height="7" fill="#404040" />
      <path d="M1905 880l4 3M1909 880l-4 3" stroke="#fff" />
    </svg>
  );
}

function TimeAxis() {
  return (
    <svg viewBox="7 1038 1906 18" preserveAspectRatio="none" shapeRendering="crispEdges" className={`col-span-3 block h-full w-full bg-white text-[11px] ${chartFont}`}>
      <rect x="7" y="1038" width="1906" height="1" fill="#909090" />
      {[48, ...gridX, 1866].map((x) => <rect key={x} x={x} y="1038" width="1" height="18" fill="#909090" />)}
      <g fill="#404040">
        <text x="51" y="1051">15:19</text>
        {gridX.map((x, i) => <text key={x} x={x + 2} y="1051">{times[i]}</text>)}
        <text x="1875" y="1051">10:20:5</text>
      </g>
    </svg>
  );
}

const seg = 'flex h-5 w-[19px] items-center justify-center border-r border-[#909090] last:border-r-0';

function Segments({ items, active }) {
  return (
    <div className="flex h-5 border border-[#808080] bg-[#e8e8e8]">
      {items.map((t) => (
        <button key={t} type="button" className={`${seg} -mt-px ${t === active ? 'bg-[#4a80c4] text-white' : ''}`}>{t}</button>
      ))}
    </div>
  );
}

function Arrow() {
  return (
    <span className="flex h-full w-[14px] items-center justify-center border-l border-[#a0a0a0] bg-[#ececec]">
      <svg viewBox="0 0 8 5" className="h-[5px] w-2"><path d="M0 0h8L4 5z" fill="#505050" /></svg>
    </span>
  );
}

const titleItems = ['[0601]', '주식종합차트', '-', '유통비율[50.5]', '거래대금[492(백만)]', '시가총액[454(억)]', '주식수[10,211(천)]', '유통수[5,159(천)]', 'EPS[209]', 'PBR[0.43]', '배당수익률[1.1]', 'PER[21.27]', 'ROA[1.9]', '유보율[1,969.7]', '부채비율[9.7]', '영업이익률[-0.8]', '외국인보유[112(천)]'];

function TitleBar() {
  const ic = 'flex h-4 w-[18px] items-center justify-center';
  const wide = 'flex h-4 w-5 items-center justify-center';
  return (
    <header className="flex h-6 shrink-0 items-center bg-[#3a5590] pl-[2px] text-white">
      <span className="mr-[5px] flex h-[17px] w-[14px] items-center justify-center rounded-sm border border-white bg-[#5f7ab4] font-bold">1</span>
      <h1 className="flex min-w-0 flex-1 gap-[7px] leading-5 whitespace-nowrap">
        {titleItems.map((t) => <span key={t}>{t}</span>)}
      </h1>
      <div className="flex items-center pr-px text-[#b4c2dc]">
        <button type="button" aria-label="창 분리" className={wide}><svg viewBox="0 0 14 12" className="h-3 w-[14px]" fill="none" stroke="currentColor"><path d="M4.500 3.500H.5v8h9v-4M.5 5.500h4M5.500.5h8v6h-8zM5.500 2h8" /></svg></button>
        <button type="button" aria-label="접기" className={wide}><svg viewBox="0 0 14 12" className="h-3 w-[14px]" fill="none" stroke="currentColor"><path d="M1 9.500h12v2H1z" /></svg></button>
        <button type="button" aria-label="복사" className={wide}><svg viewBox="0 0 14 12" className="h-3 w-[14px]" fill="none" stroke="currentColor"><path d="M4.500.5h9v8h-9zM4.500 3.500H.5v8h9v-3" /></svg></button>
        <button type="button" aria-label="고정" className={ic}><Pin className="size-[14px]" fill="currentColor" /></button>
        <button type="button" aria-label="글꼴" className={`${ic} font-['Liberation_Serif',serif] text-base font-bold`}>T</button>
        <button type="button" aria-label="도움말" className={`${ic} font-['Liberation_Sans',sans-serif] text-base font-bold`}>?</button>
        <span className="mx-[3px] h-3.5 w-px bg-[#8296be]" />
        <button type="button" aria-label="최소화" className={ic}><svg viewBox="0 0 10 12" className="h-3 w-[10px]"><path d="M0 9h10v2H0z" fill="currentColor" /></svg></button>
        <button type="button" aria-label="이전 크기" className={ic}><svg viewBox="0 0 11 10" className="h-[10px] w-[11px]" fill="none" stroke="currentColor"><path d="M3.500 2.500v-2h7v5h-3M.5 3.500h7v6h-7zM.5 5h7" /></svg></button>
        <button type="button" aria-label="닫기" className={ic}><X className="size-3" /></button>
      </div>
    </header>
  );
}

function Toolbar() {
  const box = 'flex h-5 items-center border border-[#808080] bg-[#e8e8e8]';
  return (
    <div className="flex items-center gap-px">
      <button type="button" aria-label="패널" className={`${box} w-5 justify-center`}>
        <svg viewBox="0 0 14 14" className="size-[14px]" shapeRendering="crispEdges"><path d="M3.5 4V1.500h9v11h-9V10M8.500 2v10" fill="none" stroke="#505050" /><path d="M1 4v6l4-3z" fill="#202020" /></svg>
      </button>
      <label className={`${box} w-8 bg-white`}>
        <select aria-label="구분" className="w-4 flex-1 appearance-none pl-[2px] text-[#505050] outline-none"><option>주</option></select>
        <Arrow />
      </label>
      <button type="button" className={`${box} w-5 justify-center`}>전</button>
      <div className={`${box} w-[88px] bg-white`}>
        <input aria-label="종목코드" defaultValue="038950" className="w-[54px] bg-white pl-[2px] text-[12px] outline-none" />
        <Arrow />
        <button type="button" aria-label="검색" className="flex h-full flex-1 items-center justify-center border-l border-[#a0a0a0] bg-[#ececec]"><Search className="size-3 text-[#707070]" /></button>
      </div>
      <button type="button" aria-label="소리" className={`${box} w-7 justify-between`}><Volume1 className="size-[13px] text-[#606060]" fill="currentColor" /><ChevronDown className="size-[10px]" fill="currentColor" /></button>
      <div className={`${box} w-[82px]`}><span className="px-[3px]">코</span><span className="h-full flex-1 bg-white text-center whitespace-nowrap text-[#800040]">파인디지털</span></div>
      <Segments items={['일', '주', '월', '년']} />
      <Segments items={['분', '초', '틱']} active="초" />
      <div className="text-[12px]"><Segments items={['1', '3', '5', '10', '15', '30', '45', '60']} active="5" /></div>
      <label className={`${box} w-[39px] bg-white text-[12px]`}>
        <select aria-label="주기" className="w-4 flex-1 appearance-none pl-2 outline-none"><option>5</option></select>
        <Arrow />
      </label>
      <input aria-label="조회 개수" defaultValue="343" className="h-5 w-[30px] border border-[#808080] bg-white text-right text-[12px] outline-none" />
      <span className="w-[34px] text-[12px] text-[#505050]">/1800</span>
      <div className="flex h-5 border border-[#808080] bg-[#e8e8e8]">
        <button type="button" aria-label="차트 추가" className={seg}><svg viewBox="0 0 14 14" className="size-[14px]" fill="#505050"><path d="M0 2h4v6H0zM1.500 0h1v10h-1zM9 7h2v2h2v2h-2v2H9v-2H7V9h2z" /><path d="M5 2h4v5H5zM6.500 0h1v9h-1z" fill="#999" /></svg></button>
        <button type="button" aria-label="지표 추가" className={seg}><svg viewBox="0 0 14 14" className="size-[14px]"><path d="M0 6l3-4 3 4 4-4 2 2" fill="none" stroke="#777" /><path d="M10 7h2v2h2v2h-2v2h-2v-2H8V9h2z" fill="#505050" /></svg></button>
        <button type="button" aria-label="저장" className={seg}><Save className="size-[14px] text-[#505050]" /></button>
        <button type="button" aria-label="설정" className={seg}><Settings className="size-[14px] text-[#606060]" strokeWidth={3} /></button>
      </div>
      <label className="flex items-center gap-px text-[12px]">
        <input type="checkbox" className="size-[13px] appearance-none border border-[#808080] bg-white" />D
      </label>
    </div>
  );
}

function QuoteBar() {
  const b = 'text-[#1446be]';
  return (
    <div className="flex items-center gap-[2px] whitespace-nowrap">
      <div className="flex h-5 items-center border border-[#808080] bg-[#f0f0f0] text-right">
        <div className={`flex h-full w-[172px] items-center border-r border-[#c0c0c0] pr-[2px] ${b}`}>
          <span className="w-[61px]">4,445</span>
          <svg viewBox="0 0 10 9" className="mx-[2px] h-[9px] w-[10px]"><path d="M0 0h10L5 9z" fill="currentColor" /></svg>
          <span className="flex-1">80</span><span className="w-12">-1.77%</span>
        </div>
        <div className="flex h-full w-[171px] items-center border-r border-[#c0c0c0] pr-[3px]">
          <span className="w-[69px]">110,719</span><span className={`flex-1 ${b}`}>5.02%</span><span className="w-[42px]">1.08%</span>
        </div>
        <span className="w-20 pr-[2px]">492백만</span>
        <div className="flex h-[18px] w-[140px] items-center border-x border-[#c0c0c0] pl-[2px]">
          <span>최우선</span><span className={`w-[43px] ${b}`}>4,450</span><span className={`w-[50px] ${b}`}>4,440</span>
        </div>
        <span className="w-[14px]">시</span><span className={`w-[39px] ${b}`}>4,480</span>
        <span className="w-[21px]">고</span><span className="w-10">4,525</span>
        <span className="w-5">저</span><span className={`w-[41px] pr-[2px] ${b}`}>4,410</span>
        <span className="w-[9px]" />
      </div>
      <button type="button" className="h-5 w-10 border border-[#808080] bg-[#f5d0cb]">매수</button>
      <button type="button" className="h-5 w-10 border border-[#808080] bg-[#c8dff5]">매도</button>
    </div>
  );
}

const chartTools = [
  ['새 창', 'M2 2h9v9H2zM8 8h8v8H8zM12 8v8M8 12h8'],
  ['겹치기', 'M2 2h9v8H2zM6 6h10v9H6zM6 8h10'],
  ['구간', 'M1 2h14M1 15h14M2 11l3-3 2 2 3-4 4 2'],
  ['십자선', 'M4 1v15M1 4h15M8 8l6 6M8 8h4M8 8v4'],
  ['추세', 'M1 3h15M2 14l3-5 2 3 3-7 3 6 3-2'],
  ['수직선', 'M5 1v15M2 9l6 4 3-7 3 5 2-3'],
  ['사선', 'M2 15L12 1M5 13l4-6 3 5 3-4'],
  ['지우기', 'M2 11l6-8h7l-6 8zM2 11v3h7l6-8V3M10 12v4M13 11v5M16 11v5'],
  ['겹친 차트', 'M2 7h11v8H2zM5 2h11v8M3 12l3-3 2 2 4-3'],
];

function BottomBar() {
  const btn = 'flex h-4 w-[17px] items-center justify-center border border-t-white border-l-white border-r-[#606060] border-b-[#606060] bg-[#f0f0f0]';
  return (
    <footer className="flex h-[18px] shrink-0 items-center bg-[#f0f0f0]">
      <button type="button" aria-label="이전" className={btn}><Play className="size-2 rotate-180" fill="currentColor" /></button>
      <div className="flex h-full flex-1 bg-[#f4f4f4]"><div className="ml-auto h-4 w-72 border border-t-white border-l-white border-r-[#707070] border-b-2 border-b-[#707070] bg-[#f0f0f0]" /></div>
      <button type="button" aria-label="재생" className={btn}><Play className="size-2" fill="currentColor" /></button>
      <button type="button" aria-label="뒤로" className={btn}><Rewind className="size-[10px]" fill="currentColor" /></button>
      <button type="button" aria-label="정지" className={btn}><Square className="size-2" fill="currentColor" /></button>
      <button type="button" aria-label="앞으로" className={btn}><FastForward className="size-[10px]" fill="currentColor" /></button>
      <div className="mx-1 flex w-[70px] flex-col gap-[2px]">
        <input type="range" aria-label="속도" defaultValue="20" className="h-3 w-full appearance-none bg-[linear-gradient(#808080,#808080)] bg-[length:100%_2px] bg-center bg-no-repeat [&::-webkit-slider-thumb]:h-[11px] [&::-webkit-slider-thumb]:w-[5px] [&::-webkit-slider-thumb]:appearance-none [&::-webkit-slider-thumb]:border [&::-webkit-slider-thumb]:border-[#808080] [&::-webkit-slider-thumb]:bg-[#f0f0f0]" />
        <span className="flex justify-between px-[2px]">{Array.from({ length: 11 }, (_, i) => <i key={i} className="h-[3px] w-px bg-black" />)}</span>
      </div>
      <div className="flex items-center pl-[3px] text-[#555]">
        {chartTools.map(([name, d], i) => (
          <button key={name} type="button" aria-label={name} className={`flex h-[18px] w-[17px] items-center justify-center ${i === 3 ? 'bg-white' : ''}`}>
            <svg viewBox="0 0 17 17" className="size-[15px]" fill="none" stroke="currentColor"><path d={d} /></svg>
          </button>
        ))}
        <button type="button" aria-label="확대경" className="flex w-[17px] justify-center"><Search className="size-[14px]" /></button>
        <button type="button" aria-label="축소" className="flex w-[17px] justify-center"><Minus className="size-[14px]" strokeWidth={4} /></button>
        <button type="button" aria-label="확대" className="flex w-[17px] justify-center"><Plus className="size-[14px]" strokeWidth={4} /></button>
        <button type="button" className="w-[17px] font-['Liberation_Mono',monospace] text-base leading-4 font-bold">A</button>
      </div>
    </footer>
  );
}

export default function App() {
  return (
    <div className="flex h-screen flex-col overflow-hidden bg-black pt-px pb-[3px] pl-px font-['Noto_Sans_CJK_KR',sans-serif] text-[13px] leading-4">
      <TitleBar />
      <main className="mr-[3px] ml-[2px] flex min-h-0 flex-1 flex-col bg-[#d0d0d0]">
        <div className="flex h-[51px] shrink-0 flex-col gap-[3px] pt-[5px] pl-[3px]">
          <Toolbar />
          <QuoteBar />
        </div>
        <div className="flex min-h-0 flex-1 flex-col bg-[#e8e8e8] pr-[3px] pb-[2px] pl-[3px]">
          <div className="relative grid min-h-0 flex-1 grid-cols-[42px_minmax(0,1fr)_47px] grid-rows-[minmax(0,797fr)_minmax(0,164fr)_18px] border border-b-0 border-[#909090] bg-white">
            <LeftAxis />
            <PriceChart />
            <RightAxis />
            <div className="col-start-2 row-start-2 min-h-0 border-t border-[#909090]"><VolumeChart /></div>
            <TimeAxis />
            <div className="absolute top-px left-[45px] flex items-center gap-[2px]">
              <span className="size-[6px] border border-[#606060] bg-[#c0c0c0]" />
              <span className="h-[15px] border border-[#b0b0b0] bg-[#f0f0f0] px-[2px] leading-[13px] text-[#404040]">파인디지털 매물대 수(13)</span>
            </div>
          </div>
          <div className="border border-b-0 border-[#909090]"><BottomBar /></div>
        </div>
      </main>
    </div>
  );
}
